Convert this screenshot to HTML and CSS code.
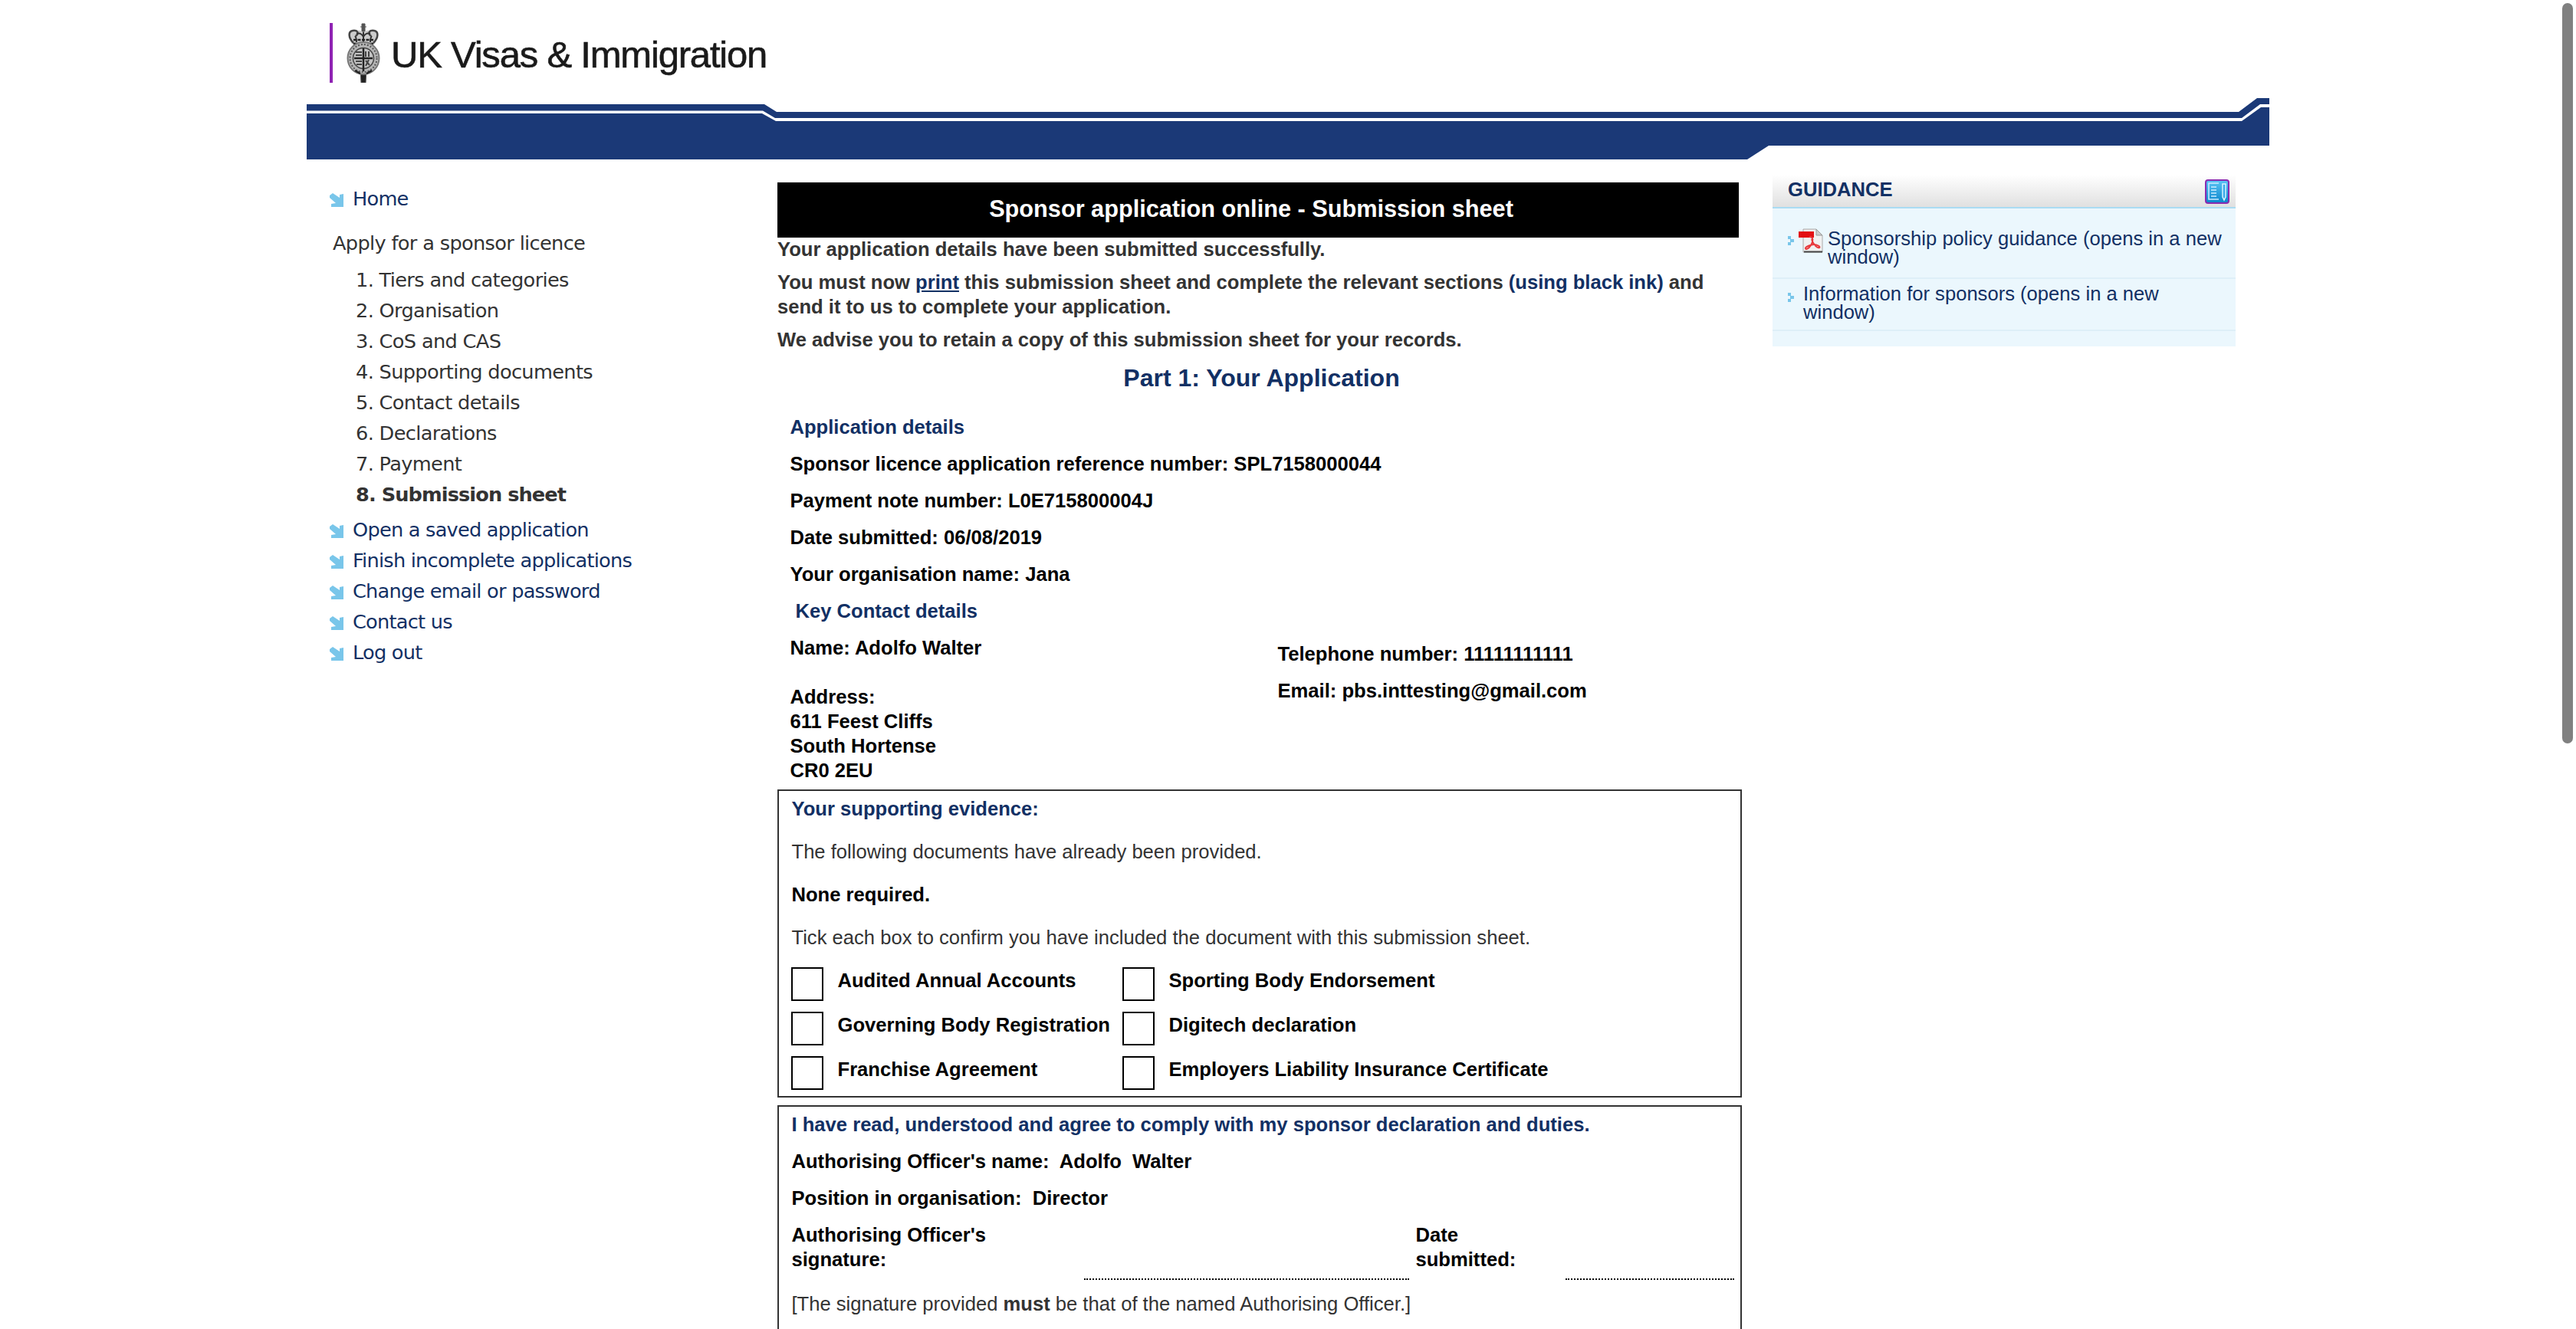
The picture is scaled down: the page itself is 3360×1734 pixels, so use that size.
FILE: index.html
```html
<!DOCTYPE html>
<html lang="en"><head><meta charset="utf-8"><title>Submission sheet</title><link rel="stylesheet" href="styles.css"></head>
<body>
<div class="page">
<header class="header">
  <div class="brand">
    <svg class="crest" width="44" height="78" viewBox="0 0 44 78">
      <path d="M20 1h4v11h-4zM18 5h8" fill="#555" stroke="#555"/>
      <path d="M8 28C1 19 2 9 10 10c5-1 9 0 12 2 3-2 7-3 12-2 8-1 9 9 2 18z" fill="#ccc"/>
      <path d="M9 26C2 19 2 11 8 10s9 3 4 7M35 26c7-7 7-15 1-16s-9 3-4 7" fill="none" stroke="#444" stroke-width="2.500"/>
      <path d="M22 12v14M11 17c2 2 2 5 2 8M33 17c-2 2-2 5-2 8M13 14c5-2 8 2 9 4 1-2 4-6 9-4" fill="none" stroke="#333" stroke-width="2"/>
      <path d="M9 22h26M9 27h26" stroke="#222" stroke-width="2.500" stroke-dasharray="4 1.500"/>
      <path d="M9 29h26v4H9z" fill="#777"/>
      <path d="M18 60h8l-1 18h-6z" fill="#222" stroke="#555"/>
      <ellipse cx="22" cy="46" rx="20.500" ry="21" fill="#b5b5b5" stroke="#777" stroke-width="2"/>
      <ellipse cx="22" cy="46" rx="17.500" ry="18" fill="none" stroke="#555" stroke-width="2" stroke-dasharray="2 2"/>
      <circle cx="22" cy="46" r="13.500" fill="#c4c4c4" stroke="#444" stroke-width="1.500"/>
      <path d="M22 33v30M10 46h24" stroke="#222" stroke-width="2.500"/>
      <path d="M12 38h8M12 42h8M25 37v7M29 37v7M12 50h8M13 54h7M25 49l5 6M29 48l-4 8" stroke="#444" stroke-width="2"/>
      <path d="M11 62l7 4M33 62l-7 4" stroke="#222" stroke-width="2.500"/>
    </svg>
    <span class="brand-name">UK Visas &amp; Immigration</span>
  </div>
  <svg class="band" width="2560" height="80" viewBox="0 0 2560 80" fill="#1b3977">
    <path d="M0 8h597l16 10h1907l24-18h16v8h-12l-24 18H611L595 16.500H0z"/>
    <path d="M0 20h594l18 10h1912l25-18h11v50H1907l-28 18H0z"/>
  </svg>
</header>
<div class="columns">
<nav class="nav">
  <a class="home"><svg class="arr" viewBox="0 0 18 18"><path d="M0 3l4-3 9 6V2l5-1v17H2v-4l6-1-8-7z"/></svg><span>Home</span></a>
  <p class="nav-title"><span>Apply for a sponsor licence</span></p>
  <ul class="steps">
    <li>1. Tiers and categories</li><li>2. Organisation</li><li>3. CoS and CAS</li><li>4. Supporting documents</li><li>5. Contact details</li><li>6. Declarations</li><li>7. Payment</li><li class="current">8. Submission sheet</li>
  </ul>
  <a><svg class="arr" viewBox="0 0 18 18"><path d="M0 3l4-3 9 6V2l5-1v17H2v-4l6-1-8-7z"/></svg><span>Open a saved application</span></a>
  <a><svg class="arr" viewBox="0 0 18 18"><path d="M0 3l4-3 9 6V2l5-1v17H2v-4l6-1-8-7z"/></svg><span>Finish incomplete applications</span></a>
  <a><svg class="arr" viewBox="0 0 18 18"><path d="M0 3l4-3 9 6V2l5-1v17H2v-4l6-1-8-7z"/></svg><span>Change email or password</span></a>
  <a><svg class="arr" viewBox="0 0 18 18"><path d="M0 3l4-3 9 6V2l5-1v17H2v-4l6-1-8-7z"/></svg><span>Contact us</span></a>
  <a><svg class="arr" viewBox="0 0 18 18"><path d="M0 3l4-3 9 6V2l5-1v17H2v-4l6-1-8-7z"/></svg><span>Log out</span></a>
</nav>
<main class="sheet">
  <h1>Sponsor application online - Submission sheet</h1>
  <div class="intro">
    <p>Your application details have been submitted successfully.</p>
    <p>You must now <a class="print">print</a> this submission sheet and complete the relevant sections <span class="navy">(using black ink)</span> and<br>send it to us to complete your application.</p>
    <p>We advise you to retain a copy of this submission sheet for your records.</p>
  </div>
  <h2>Part 1: Your Application</h2>
  <section class="details">
    <h3>Application details</h3>
    <p>Sponsor licence application reference number: SPL7158000044</p>
    <p>Payment note number: L0E715800004J</p>
    <p>Date submitted: 06/08/2019</p>
    <p>Your organisation name: Jana</p>
    <h3 class="key">Key Contact details</h3>
    <div class="contact">
      <div><p>Name: Adolfo Walter</p><address>Address:<br>611 Feest Cliffs<br>South Hortense<br>CR0 2EU</address></div>
      <div class="reach"><p>Telephone number: 11111111111</p><p>Email: pbs.inttesting@gmail.com</p></div>
    </div>
  </section>
  <section class="box evidence">
    <h3>Your supporting evidence:</h3>
    <p class="plain">The following documents have already been provided.</p>
    <p>None required.</p>
    <p class="plain">Tick each box to confirm you have included the document with this submission sheet.</p>
    <div class="ticks">
      <i></i><span>Audited Annual Accounts</span><i></i><span>Sporting Body Endorsement</span>
      <i></i><span>Governing Body Registration</span><i></i><span>Digitech declaration</span>
      <i></i><span>Franchise Agreement</span><i></i><span>Employers Liability Insurance Certificate</span>
    </div>
  </section>
  <section class="box officer">
    <h3>I have read, understood and agree to comply with my sponsor declaration and duties.</h3>
    <p>Authorising Officer's name:&nbsp; Adolfo&nbsp; Walter</p>
    <p>Position in organisation:&nbsp; Director</p>
    <div class="sign"><span>Authorising Officer's signature:</span><div class="line"></div><span class="date">Date submitted:</span><div class="line"></div></div>
    <p class="plain">[The signature provided <b>must</b> be that of the named Authorising Officer.]</p>
  </section>
</main>
<aside class="guidance">
  <div class="g-head"><h4>GUIDANCE</h4>
    <svg class="note" width="32" height="32" viewBox="0 0 32 32"><defs><linearGradient id="g" x2="0" y2="1"><stop stop-color="#5cc4f5"/><stop offset="1" stop-color="#0a86cc"/></linearGradient></defs><rect x="1" y="1" width="30" height="30" rx="3" fill="url(#g)" stroke="#8a2bb0" stroke-width="2"/><path d="M18 5H5v21h13M8 10h7M8 14h7M8 18h7M8 22h7" fill="none" stroke="#c9ecff" stroke-width="1.600"/><path d="M23 6h4v17l-2 4-2-4z" fill="#3aa9ea" stroke="#d8f2ff" stroke-width="1.500"/></svg>
  </div>
  <ul>
    <li class="policy"><svg class="bul" viewBox="0 0 8 12"><path d="M0 0h4v4h4v4H4v4H0V8h3V4H0z"/></svg>
      <svg class="pdf" width="32" height="32" viewBox="0 0 32 32"><path d="M6 1h17l8 8v22H6z" fill="#f1f1f1" stroke="#aaa"/><path d="M7 30.500h24" stroke="#444" stroke-width="2"/><path d="M23 1v8h8z" fill="#ccc" stroke="#999"/><path d="M0 4h20v8H0z" fill="#e30f13"/><path d="M14 11c6 0 5 6 2 11s-7 6-7 4 7-5 11-5 9 3 7 4-8-3-10-11" fill="none" stroke="#e8383b" stroke-width="2"/></svg>
      <a>Sponsorship policy guidance (opens in a new window)</a></li>
    <li class="info"><svg class="bul" viewBox="0 0 8 12"><path d="M0 0h4v4h4v4H4v4H0V8h3V4H0z"/></svg><a>Information for sponsors (opens in a new window)</a></li>
  </ul>
</aside>
</div>
</div>
<div class="scrollbar"></div>
</body></html>
```

FILE: styles.css
```css
* { box-sizing: border-box; }
html, body { height: 1734px; overflow: hidden; }
body { margin: 0; background: #fff; color: #333; font: 25.6px/32px "Liberation Sans", Arial, sans-serif; }
h1, h2, h3, h4, p, ul { margin: 0; padding: 0; }
ul { list-style: none; }
svg { flex: none; }
.page { width: 2560px; margin: 0 auto; }
.header { height: 208px; display: flex; flex-direction: column; justify-content: space-between; padding-top: 30px; }
.brand { display: flex; margin-left: 30px; height: 78px; border-left: 4px solid #8f23b3; padding-left: 18px; }
.brand-name { font-size: 49px; line-height: 82px; margin-left: 14px; color: #1a1a1a; white-space: nowrap; letter-spacing: -1.2px; -webkit-text-stroke: .6px #1a1a1a; }
.band { display: block; }
.columns { display: flex; align-items: flex-start; }

.nav { width: 614px; padding: 31px 0 0 30px; font-family: "DejaVu Sans", Verdana, sans-serif; line-height: 40px; letter-spacing: -.65px; }
.nav a { display: flex; align-items: center; gap: 12px; color: #123064; height: 40px; letter-spacing: -.75px; }
.arr { width: 18px; height: 18px; fill: #79c6ea; margin-top: 4px; }
.nav-title { margin: 18px 0 8px 4px; }
.steps { padding-left: 34px; margin-bottom: 6px; }
.current { font-weight: bold; letter-spacing: -.9px; }

.sheet { width: 1258px; padding-top: 30px; font-weight: bold; white-space: nowrap; }
h1 { width: 1254px; height: 72px; background: #000; color: #fff; text-align: center; font-size: 30.7px; line-height: 70px; padding-right: 18px; }
.intro { margin-top: -1px; display: flex; flex-direction: column; gap: 11px; }
.print { text-decoration: underline; color: #123064; }
.navy, h2, h3, h4 { color: #123064; }
h2 { text-align: center; font-size: 32px; line-height: 40px; margin-top: 14px; padding-left: 5px; }
h3 { font-size: 25.6px; }
.details { color: #000; padding: 28px 0 0 16.5px; display: grid; row-gap: 16px; }
.key { padding-left: 7px; }
.contact { display: grid; grid-template-columns: 636px 1fr; }
address { font-style: normal; margin-top: 32px; }
.reach { display: grid; row-gap: 16px; align-content: start; padding-top: 8px; }

.box { width: 1258px; border: 2px solid #333; padding: 7px 8px 0 16px; color: #000; margin-top: 9px; }
.box > h3, .box > p { padding-left: .5px; }
.plain { font-weight: normal; color: #333; }
.evidence { height: 402px; display: grid; row-gap: 24px; align-content: start; }
.ticks { display: grid; grid-template-columns: 60.5px 371.5px 60.5px 1fr; grid-auto-rows: 58px; }
.ticks i { width: 42px; height: 44px; border: 2px solid #000; margin-top: -1px; }
.officer { display: grid; row-gap: 16px; align-content: start; height: 340px; margin-top: 10px; }
.sign { display: grid; grid-template-columns: 382px 424px 8px 196px 1fr; white-space: normal; height: 74px; }
.sign span { width: 300px; padding-left: .5px; }
.sign .date { width: 160px; grid-column: 4; }
.line { border-bottom: 2px dotted #000; height: 75px; }

.guidance { width: 604px; margin-left: 40px; margin-top: 20px; height: 224px; background: #ebf7fd; }
.g-head { height: 44px; padding: 0 8px 0 20px; display: flex; align-items: flex-start; justify-content: space-between; border-bottom: 2px solid #aadcf3; background: linear-gradient(#fff, #e0e0e0); }
.note { margin-top: 6px; }
h4 { font-size: 25.6px; line-height: 38px; }
.guidance li { display: flex; align-items: flex-start; line-height: 24px; border-bottom: 2px solid #deeff8; padding-left: 20px; }
.guidance a { color: #123064; width: 525px; }
.bul { width: 8px; height: 12px; fill: #79c6ea; }
.policy { height: 92px; padding-top: 27px; }
.policy .bul { margin-top: 9px; }
.pdf { margin: -1px 6px 0; }
.info { height: 68px; padding-top: 7px; }
.info .bul { margin: 11px 12px 0 0; }

.scrollbar { position: absolute; left: 3342px; top: 4px; width: 14px; height: 966px; border-radius: 7px; background: #808080; }
```
